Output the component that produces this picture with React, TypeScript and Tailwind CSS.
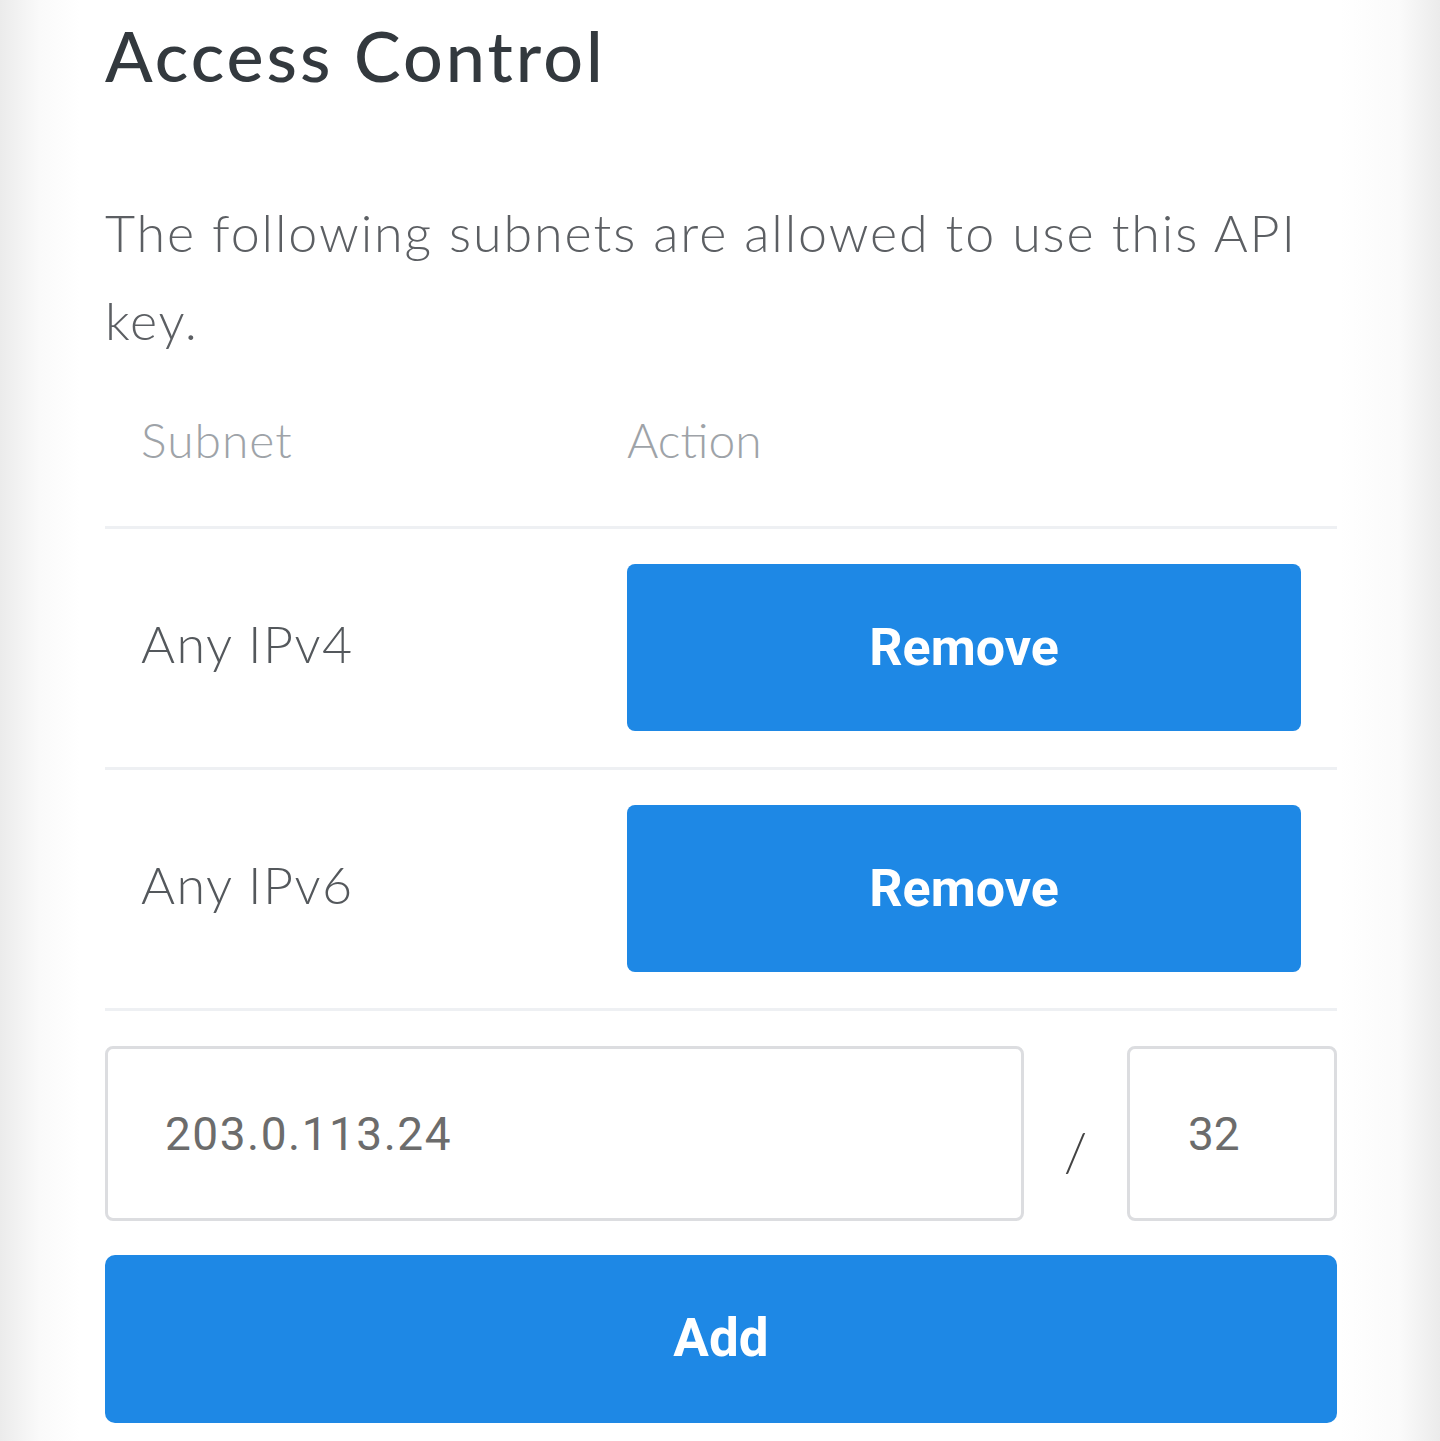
import React from "react";

const rows = ["Any IPv4", "Any IPv6"];

const App = () => {
  return (
    <div className="min-h-[1441px] w-full bg-[linear-gradient(to_right,#ebebeb_0px,#fafafa_40px,#ffffff_80px,#ffffff_calc(100%-100px),#fafafa_calc(100%-40px),#ebebeb_100%)] font-[Lato,sans-serif]">
      <div className="mx-auto w-[1232px] translate-x-[1px] pt-[13px]">
        <h1 className="text-[70px] leading-[1.2] font-medium tracking-[3px] text-[#33393e]">
          Access Control
        </h1>
        <p className="mt-[91px] text-[52px] leading-[88px] font-light tracking-[1.9px] text-[#5c5f63]">
          The following subnets are allowed to use this API key.
        </p>

        <div className="grid grid-cols-[522px_1fr]">
          <div className="border-b-[3px] border-[#eef0f3] pt-10 pb-[50px] pl-9 text-[48px] leading-[72px] font-light tracking-[1px] text-[#9ea3a8]">
            Subnet
          </div>
          <div className="border-b-[3px] border-[#eef0f3] pt-10 pb-[50px] pr-9 text-[48px] leading-[72px] font-light text-[#9ea3a8]">
            Action
          </div>
          {rows.map((row) => (
            <React.Fragment key={row}>
              <div className="flex items-center border-b-[3px] border-[#eef0f3] pb-[10px] pl-9 text-[52px] font-light tracking-[1.5px] text-[#54585c]">
                {row}
              </div>
              <div className="border-b-[3px] border-[#eef0f3] pt-[35px] pb-9 pr-9">
                <button className="flex h-[167px] w-full items-center justify-center rounded-[8px] bg-[#1e88e5] font-[Roboto,sans-serif] text-[52px] font-bold text-white">
                  Remove
                </button>
              </div>
            </React.Fragment>
          ))}
        </div>

        <div className="mt-[35px] flex">
          <input
            className="h-[175px] w-[919px] rounded-[8px] border-[3px] border-[#dcdde0] bg-white pl-[57px] font-[Roboto,sans-serif] text-[46px] tracking-[1.5px] text-[#6c6c6c] outline-none"
            defaultValue="203.0.113.24"
          />
          <div className="flex w-[103px] items-center justify-center pt-[34px] font-[Lato,sans-serif] text-[54px] font-light text-[#444]">
            /
          </div>
          <input
            className="h-[175px] w-[210px] rounded-[8px] border-[3px] border-[#dcdde0] bg-white pl-[58px] font-[Roboto,sans-serif] text-[46px] text-[#6c6c6c] outline-none"
            defaultValue="32"
          />
        </div>

        <button className="mt-[34px] flex h-[168px] w-full items-center justify-center rounded-[10px] bg-[#1e88e5] font-[Roboto,sans-serif] text-[53px] font-bold text-white">
          Add
        </button>
      </div>
    </div>
  );
};

export default App;
